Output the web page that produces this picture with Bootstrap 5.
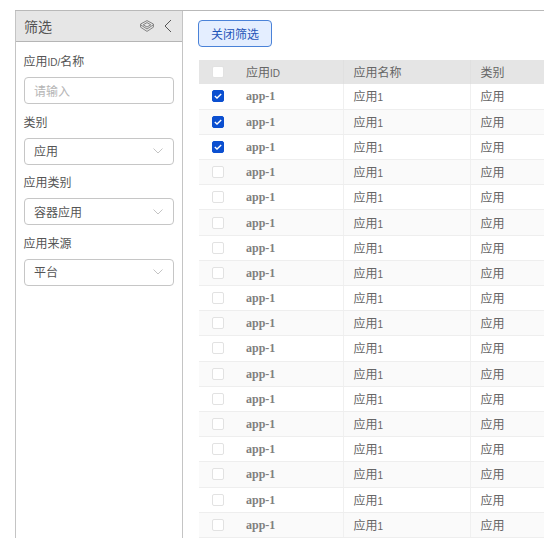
<!DOCTYPE html>
<html lang="zh">
<head>
<meta charset="utf-8">
<title>筛选</title>
<link rel="stylesheet" href="https://cdn.jsdelivr.net/npm/bootstrap@5.3.0/dist/css/bootstrap.min.css">
<style>
html,body{height:538px;overflow:hidden;background:#fff}
body{font-family:"Noto Sans CJK SC","Liberation Sans",sans-serif;font-size:12px;color:#555}
.shell{padding:10px 0 0 15px;height:538px}
.frame{border-top:1px solid #b9b9b9;height:528px}
.side{width:168px;flex:none;border-left:1px solid #c4c4c4;border-right:1px solid #c4c4c4}
.side-head{height:31px;background:#e6e6e6;border-bottom:1px solid #b5b5b5;padding:0 10px 0 8px;font-size:14px;color:#555}
.head-tools{gap:10px}
.side-body{padding:10px 8.500px 0 7.500px}
.fld-label{font-size:12px;height:17px;line-height:17px;color:#555;margin-bottom:8px;white-space:nowrap}
.fld{height:27px;border:1px solid #c6c6c6;border-radius:4px;padding:0 9.500px;margin-bottom:8.500px;font-size:12px;color:#555;background:#fff}
.fld.hint{color:#b5b5b5}
.lat{font-family:"Liberation Sans",sans-serif;font-size:10px;line-height:1}
.main{padding:9px 0 0 15px;min-width:0;flex:1;overflow:hidden}
.close-btn{width:74px;height:27px;padding:0;font-size:12px;line-height:25px;color:#1f55b8;background:#e4eeff;border:1px solid #4a82d8;border-radius:4px;margin-bottom:13px;display:block}
.tbl{width:345px;margin:0 0 0 1px;table-layout:fixed;border-collapse:collapse;font-size:12px;color:#666}
.tbl th,.tbl td{padding:0 0 0 10px;height:25.2px;vertical-align:middle;font-weight:400;white-space:nowrap;overflow:hidden;color:#666;box-shadow:none;background:#fff;border:0;border-bottom:1px solid #eee}
.tbl th{height:24px;background:#e5e5e5;border-bottom:0;color:#666}
.tbl tr:nth-child(even) td{background:#fafafa}
.tbl td+td+td,.tbl th+th+th{border-left:1px solid #f0f0f0}
.tbl th+th+th{border-left-color:#e0e0e0}
.tbl .c0{width:37px;padding:0 0 0 13px}
.tbl .c1{width:107px}
.tbl .c2{width:127px}
.tbl .c3{width:74px}
.tbl td.appid{font-family:"Liberation Serif",serif;font-weight:700;font-size:12px;color:#808080}
.tick{width:12px;height:12px;border-radius:2px;border:1px solid #e2e2e2;background:#fff;display:block}
.tick.on{background:#0b4fd0;border-color:#0b4fd0;display:flex;align-items:center;justify-content:center}
.tick.on svg{display:block}
</style>
</head>
<body>
<div class="shell">
<div class="frame d-flex">
<aside class="side">
<div class="side-head d-flex align-items-center justify-content-between">
<span>筛选</span>
<span class="d-flex align-items-center head-tools">
<svg width="14" height="12" viewBox="0 0 14 12" fill="none" stroke="#777" stroke-width=".9"><path d="M7 .6 13.400 4 13.400 7.200 7 11.400 .6 7.200 .6 4Z"/><path d="M7 2.600 10.800 4.800 7 7 3.200 4.800Z"/><path d="M.6 4.800 7 9 13.400 4.800"/></svg>
<svg width="8" height="14" viewBox="0 0 8 14" fill="none" stroke="#555" stroke-width="1"><path d="M7 1 1 7l6 6"/></svg>
</span>
</div>
<div class="side-body">
<div class="fld-label">应用<span class="lat">ID/</span>名称</div>
<div class="fld hint d-flex align-items-center">请输入</div>
<div class="fld-label">类别</div>
<div class="fld d-flex align-items-center justify-content-between">应用<svg width="10" height="6" viewBox="0 0 10 6" fill="none" stroke="#c4c4c4"><path d="M.5.5 5 5 9.500.5"/></svg></div>
<div class="fld-label">应用类别</div>
<div class="fld d-flex align-items-center justify-content-between">容器应用<svg width="10" height="6" viewBox="0 0 10 6" fill="none" stroke="#c4c4c4"><path d="M.5.5 5 5 9.500.5"/></svg></div>
<div class="fld-label">应用来源</div>
<div class="fld d-flex align-items-center justify-content-between">平台<svg width="10" height="6" viewBox="0 0 10 6" fill="none" stroke="#c4c4c4"><path d="M.5.5 5 5 9.500.5"/></svg></div>
</div>
</aside>
<main class="main">
<button type="button" class="btn close-btn">关闭筛选</button>
<table class="table tbl">
<thead><tr><th class="c0"><span class="tick"></span></th><th class="c1">应用<span class="lat">ID</span></th><th class="c2">应用名称</th><th class="c3">类别</th></tr></thead>
<tbody>
<tr><td class="c0"><span class="tick on"><svg width="8" height="6" viewBox="0 0 8 6" fill="none" stroke="#fff" stroke-width="1.400"><path d="M.8 3 3 5 7.200 1"/></svg></span></td><td class="appid">app-1</td><td>应用<span class="lat">1</span></td><td>应用</td></tr>
<tr><td class="c0"><span class="tick on"><svg width="8" height="6" viewBox="0 0 8 6" fill="none" stroke="#fff" stroke-width="1.400"><path d="M.8 3 3 5 7.200 1"/></svg></span></td><td class="appid">app-1</td><td>应用<span class="lat">1</span></td><td>应用</td></tr>
<tr><td class="c0"><span class="tick on"><svg width="8" height="6" viewBox="0 0 8 6" fill="none" stroke="#fff" stroke-width="1.400"><path d="M.8 3 3 5 7.200 1"/></svg></span></td><td class="appid">app-1</td><td>应用<span class="lat">1</span></td><td>应用</td></tr>
<tr><td class="c0"><span class="tick"></span></td><td class="appid">app-1</td><td>应用<span class="lat">1</span></td><td>应用</td></tr>
<tr><td class="c0"><span class="tick"></span></td><td class="appid">app-1</td><td>应用<span class="lat">1</span></td><td>应用</td></tr>
<tr><td class="c0"><span class="tick"></span></td><td class="appid">app-1</td><td>应用<span class="lat">1</span></td><td>应用</td></tr>
<tr><td class="c0"><span class="tick"></span></td><td class="appid">app-1</td><td>应用<span class="lat">1</span></td><td>应用</td></tr>
<tr><td class="c0"><span class="tick"></span></td><td class="appid">app-1</td><td>应用<span class="lat">1</span></td><td>应用</td></tr>
<tr><td class="c0"><span class="tick"></span></td><td class="appid">app-1</td><td>应用<span class="lat">1</span></td><td>应用</td></tr>
<tr><td class="c0"><span class="tick"></span></td><td class="appid">app-1</td><td>应用<span class="lat">1</span></td><td>应用</td></tr>
<tr><td class="c0"><span class="tick"></span></td><td class="appid">app-1</td><td>应用<span class="lat">1</span></td><td>应用</td></tr>
<tr><td class="c0"><span class="tick"></span></td><td class="appid">app-1</td><td>应用<span class="lat">1</span></td><td>应用</td></tr>
<tr><td class="c0"><span class="tick"></span></td><td class="appid">app-1</td><td>应用<span class="lat">1</span></td><td>应用</td></tr>
<tr><td class="c0"><span class="tick"></span></td><td class="appid">app-1</td><td>应用<span class="lat">1</span></td><td>应用</td></tr>
<tr><td class="c0"><span class="tick"></span></td><td class="appid">app-1</td><td>应用<span class="lat">1</span></td><td>应用</td></tr>
<tr><td class="c0"><span class="tick"></span></td><td class="appid">app-1</td><td>应用<span class="lat">1</span></td><td>应用</td></tr>
<tr><td class="c0"><span class="tick"></span></td><td class="appid">app-1</td><td>应用<span class="lat">1</span></td><td>应用</td></tr>
<tr><td class="c0"><span class="tick"></span></td><td class="appid">app-1</td><td>应用<span class="lat">1</span></td><td>应用</td></tr>
</tbody>
</table>
</main>
</div>
</div>
</body>
</html>
